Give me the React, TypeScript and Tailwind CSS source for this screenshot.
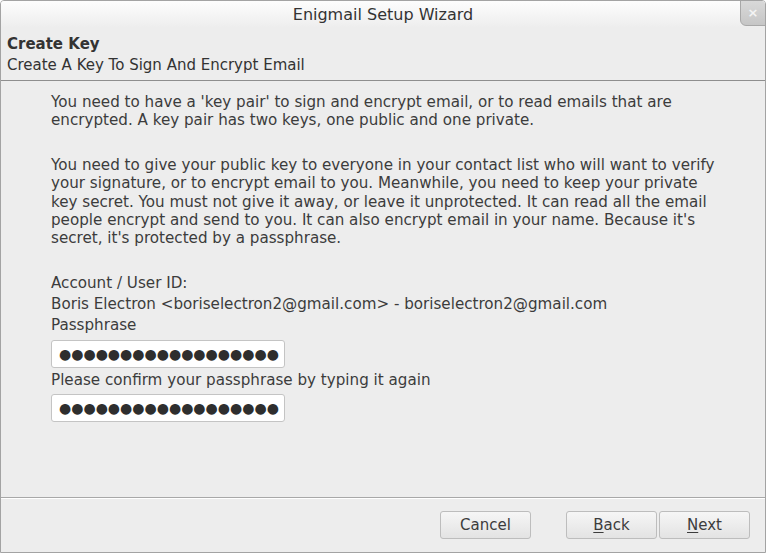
export default function App() {
  const dots = "●".repeat(18);
  return (
    <div
      className="flex h-[553px] w-[766px] flex-col overflow-hidden rounded-t-[4px] border border-[#a3a3a3] bg-[#ededed] text-[#3c3c3c]"
      style={{ fontFamily: '"DejaVu Sans", sans-serif' }}
    >
      {/* title bar */}
      <div className="relative flex h-[27px] shrink-0 items-center justify-center bg-gradient-to-b from-[#fdfdfd] to-[#ededed]">
        <span className="text-[16px] text-[#333]">Enigmail Setup Wizard</span>
        <div className="absolute right-[-1px] top-[-1px] flex h-[26px] w-[26px] items-center justify-center rounded-bl-[6px] border border-[#a8a8a8] bg-gradient-to-b from-[#d9d9d9] to-[#c6c6c6] text-[13px] font-bold text-[#f4f4f4]">
          ×
        </div>
      </div>

      {/* header */}
      <div className="h-[53px] shrink-0 border-b border-[#8e8e8e] px-[6px] pt-[6px] text-[15px] leading-[21px] text-[#333]">
        <div className="font-bold">Create Key</div>
        <div>Create A Key To Sign And Encrypt Email</div>
      </div>

      {/* content */}
      <div className="flex-1 whitespace-nowrap px-[50px] pt-[12px] text-[15.15px] leading-[18.25px]">
        <p>
          You need to have a 'key pair' to sign and encrypt email, or to read emails that are
          <br />
          encrypted. A key pair has two keys, one public and one private.
        </p>
        <p className="mt-[26.5px]">
          You need to give your public key to everyone in your contact list who will want to verify
          <br />
          your signature, or to encrypt email to you. Meanwhile, you need to keep your private
          <br />
          key secret. You must not give it away, or leave it unprotected. It can read all the email
          <br />
          people encrypt and send to you. It can also encrypt email in your name. Because it's
          <br />
          secret, it's protected by a passphrase.
        </p>
        <div className="mt-[26px] leading-[21px]">
          <div>Account / User ID:</div>
          <div>Boris Electron &lt;boriselectron2@gmail.com&gt; - boriselectron2@gmail.com</div>
          <div>Passphrase</div>
        </div>
        <div className="mt-[4px] flex h-[28px] w-[234px] items-center rounded-[3px] border border-[#c4c4c4] bg-white px-[7px] text-[14px] text-[#2e2e2e]">
          {dots}
        </div>
        <div className="mt-[2px] leading-[21px]">Please confirm your passphrase by typing it again</div>
        <div className="mt-[3px] flex h-[28px] w-[234px] items-center rounded-[3px] border border-[#c4c4c4] bg-white px-[7px] text-[14px] text-[#2e2e2e]">
          {dots}
        </div>
      </div>

      {/* footer */}
      <div className="h-[55px] shrink-0 border-t border-[#a8a8a8]">
        <div className="h-px bg-white" />
        <div className="flex items-center pl-[439px] pt-[12px] text-[15px]">
          <button className="h-[28px] w-[91px] rounded-[3px] border border-[#bdbdbd] bg-gradient-to-b from-[#f6f6f6] to-[#e3e3e3] text-[#3c3c3c]">
            Cancel
          </button>
          <button className="ml-[35px] h-[28px] w-[91px] rounded-[3px] border border-[#bdbdbd] bg-gradient-to-b from-[#f6f6f6] to-[#e3e3e3] text-[#3c3c3c]">
            <span className="underline underline-offset-[2px]">B</span>ack
          </button>
          <button className="ml-[2px] h-[28px] w-[91px] rounded-[3px] border border-[#bdbdbd] bg-gradient-to-b from-[#f6f6f6] to-[#e3e3e3] text-[#3c3c3c]">
            <span className="underline underline-offset-[2px]">N</span>ext
          </button>
        </div>
      </div>
    </div>
  );
}
